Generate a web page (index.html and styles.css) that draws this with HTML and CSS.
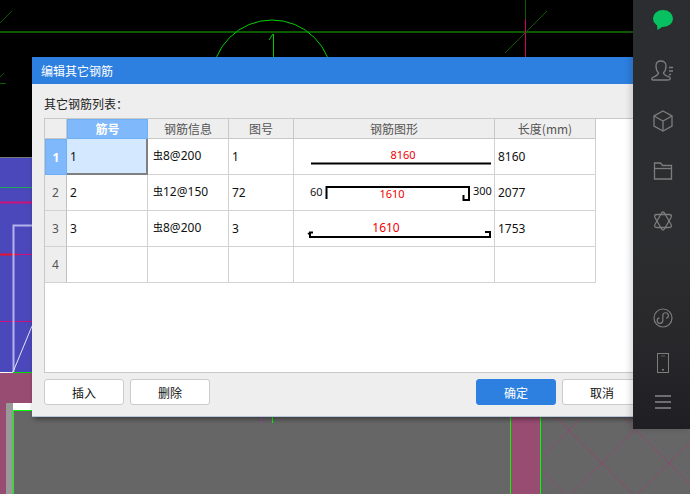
FILE: index.html
```html
<!DOCTYPE html>
<html lang="zh">
<head>
<meta charset="utf-8">
<title>编辑其它钢筋</title>
<link rel="stylesheet" href="styles.css">
</head>
<body>
<div class="desktop">
  <svg class="canvas" width="690" height="494" viewBox="0 0 690 494">
    <rect x="0" y="0" width="690" height="157" fill="#000"/>
    <rect x="0" y="157" width="690" height="1" fill="#777"/>
    <rect x="0" y="158" width="690" height="215" fill="#4b48bb"/>
    <rect x="0" y="373" width="690" height="121" fill="#994c72"/>
    <path d="M0 372.500H13" stroke="#fff" fill="none"/>
    <path d="M13 372.500H690" stroke="#0d0" fill="none"/>
    <rect x="6" y="403" width="7" height="91" fill="#999"/>
    <rect x="13" y="403" width="40" height="7" fill="#fff"/>
    <rect x="13" y="410" width="497" height="84" fill="#666"/>
    <rect x="541" y="410" width="149" height="84" fill="#666"/>
    <path d="M13 410.500H40M13.500 410V494M510.500 410V494M540.500 410V494M272.500 417V423" stroke="#0f0" fill="none"/>
    <path d="M261.500 417V423" stroke="#a040b0" fill="none"/>
    <path d="M0 32H633" stroke="#0b5a00" stroke-width="2" fill="none"/>
    <path d="M525.500 0V19M505 53L547 11M0 23L12 11M0 83.500H6M0 77L4 73" stroke="#0b5a00" fill="none"/>
    <path d="M525.500 19V57" stroke="#d0006a" fill="none"/>
    <circle cx="272" cy="80" r="60" stroke="#0c0" fill="none"/>
    <path d="M273.500 34V57M273 34L269 40" stroke="#0c0" fill="none"/>
    <path d="M0 187.500H32" stroke="#1fa85a" fill="none"/>
    <path d="M0 202.500H32" stroke="#d0107a" stroke-width="2" fill="none"/>
    <path d="M17 254.500H32M0 321.500H32" stroke="#d0107a" fill="none"/>
    <path d="M0 254.500H17" stroke="#e81030" stroke-width="2" fill="none"/>
    <path d="M13.500 372V225.500H32" stroke="#b4b4ec" stroke-width="2" fill="none"/>
    <path d="M13 372L32 326" stroke="#e4e4f8" fill="none"/>
    <path d="M549 410L633 494M616 410L690 484M541 470L565 494M589 410L541 458M655 410L571 494M690 442L638 494" stroke="#8a4a70" fill="none"/>
  </svg>

  <section class="dialog">
    <header class="dialog-title">编辑其它钢筋</header>
    <div class="dialog-body">
      <div class="list-label">其它钢筋列表：</div>
      <div class="table-box">
        <table class="grid">
          <colgroup>
            <col class="c-head"><col class="c-no"><col class="c-info"><col class="c-fig"><col class="c-shape"><col class="c-len">
          </colgroup>
          <thead>
            <tr>
              <th></th>
              <th class="is-active">筋号</th>
              <th>钢筋信息</th>
              <th>图号</th>
              <th>钢筋图形</th>
              <th>长度(mm)</th>
            </tr>
          </thead>
          <tbody>
            <tr>
              <th class="is-active">1</th>
              <td class="is-current">1</td>
              <td class="info"><span class="rebar">虫</span>8@200</td>
              <td>1</td>
              <td class="shape">
                <svg class="shape-svg" width="200" height="35" viewBox="0 0 200 35">
                  <text class="dim red" x="109" y="20" text-anchor="middle">8160</text>
                  <path class="bar" d="M17 24.500H197"/>
                </svg>
              </td>
              <td>8160</td>
            </tr>
            <tr>
              <th>2</th>
              <td>2</td>
              <td class="info"><span class="rebar">虫</span>12@150</td>
              <td>72</td>
              <td class="shape">
                <svg class="shape-svg" width="200" height="35" viewBox="0 0 200 35">
                  <text class="dim" x="16" y="21">60</text>
                  <path class="bar" d="M32.500 24V12H175V25H169.500V20"/>
                  <text class="dim red" x="98" y="23" text-anchor="middle">1610</text>
                  <text class="dim" x="179" y="20">300</text>
                </svg>
              </td>
              <td>2077</td>
            </tr>
            <tr>
              <th>3</th>
              <td>3</td>
              <td class="info"><span class="rebar">虫</span>8@200</td>
              <td>3</td>
              <td class="shape">
                <svg class="shape-svg" width="200" height="35" viewBox="0 0 200 35">
                  <text class="dim-lg red" x="92" y="21" text-anchor="middle">1610</text>
                  <path class="bar" d="M19 21.500H16V26H196V21H191"/>
                  <path class="bar-thin" d="M16 24L14 22"/>
                </svg>
              </td>
              <td>1753</td>
            </tr>
            <tr>
              <th>4</th>
              <td></td>
              <td></td>
              <td></td>
              <td></td>
              <td></td>
            </tr>
          </tbody>
        </table>
      </div>
      <div class="actions">
        <button class="btn">插入</button>
        <button class="btn">删除</button>
        <span class="spacer"></span>
        <button class="btn btn-primary">确定</button>
        <button class="btn">取消</button>
      </div>
    </div>
  </section>

  <aside class="sidebar">
    <div class="side-top">
      <svg class="ico ico-msg" width="24" height="24" viewBox="0 0 24 24"><ellipse cx="12" cy="8.500" rx="10" ry="8.500" fill="#07c160" transform="translate(0 2)"/><path d="M6 17L6.500 22L12 18.500Z" fill="#07c160"/></svg>
      <svg class="ico" width="24" height="24" viewBox="0 0 24 24" fill="none" stroke="#7d7d7d" stroke-width="1.300"><path d="M1.500 21H16.500C20 21 20 18.800 17.500 17.700C14 16.500 12.500 15.800 12.500 13.800C14 12.500 15 10 15 7C15 3.500 12.800 2 10 2C7.200 2 5 3.500 5 7C5 10 6 12.500 7.500 13.800C7.500 15.800 6 16.500 3.500 17.700C0.500 18.800 0 20.300 1.500 21Z"/><path d="M18 8.500H22M18 12H22M18 15.500H20"/></svg>
      <svg class="ico" width="24" height="24" viewBox="0 0 24 24" fill="none" stroke="#7d7d7d" stroke-width="1.300"><path d="M12 2L21 7V17L12 22L3 17V7Z"/><path d="M3 7L12 12L21 7M12 12V22"/></svg>
      <svg class="ico" width="24" height="24" viewBox="0 0 24 24" fill="none" stroke="#7d7d7d" stroke-width="1.300"><path d="M3.500 20H20.500V6.500H11.500L9.500 4H3.500Z"/><path d="M3.500 9.500H20.500"/></svg>
      <svg class="ico" width="24" height="24" viewBox="0 0 24 24" fill="none" stroke="#7d7d7d" stroke-width="1.300"><path d="M10 5Q12 1 14 5L19.500 14.500Q22 18.500 18 18.500H6Q2 18.500 4.500 14.500Z"/><path d="M10 19Q12 23 14 19L19.500 9.500Q22 5.500 18 5.500H6Q2 5.500 4.500 9.500Z"/></svg>
    </div>
    <div class="side-bottom">
      <svg class="ico ico-mini" width="24" height="24" viewBox="0 0 24 24" fill="none" stroke="#7d7d7d" stroke-width="1.200"><circle cx="12" cy="12" r="9"/><path d="M8.500 11.800A2.800 2.800 0 1 0 11.800 14.500V9.500A2.800 2.800 0 1 1 15.200 12.300"/></svg>
      <svg class="ico ico-phone" width="24" height="24" viewBox="0 0 24 24" fill="none" stroke="#7d7d7d" stroke-width="1"><rect x="6.500" y="2.500" width="11" height="19"/><path d="M10 5H14" stroke-width="0.600"/><rect x="11" y="18" width="2" height="1.500" fill="#7d7d7d" stroke="none"/></svg>
      <svg class="ico" width="24" height="24" viewBox="0 0 24 24" fill="none" stroke="#888" stroke-width="1.600"><path d="M4 6H20M4 12H20M4 18H20"/></svg>
    </div>
  </aside>
</div>
</body>
</html>
```
FILE: styles.css
```css
* { box-sizing: border-box; }
html, body { margin: 0; padding: 0; }
body {
  font-family: "Noto Sans", "Noto Sans CJK SC", sans-serif;
  font-size: 12px;
  color: #111;
}
.desktop {
  position: relative;
  width: 690px;
  height: 494px;
  overflow: hidden;
  background: #000;
}
.canvas { position: absolute; left: 0; top: 0; display: block; }

.dialog {
  position: absolute;
  left: 32px;
  top: 57px;
  width: 610px;
  height: 360px;
  display: flex;
  flex-direction: column;
  background: #eee;
  border-bottom: 1px solid #b9c6d8;
  box-shadow: 2px 2px 5px rgba(0, 0, 0, 0.45);
}
.dialog-title {
  height: 27px;
  flex: none;
  background: #2d7fe0;
  color: #fff;
  padding-left: 9px;
  line-height: 27px;
  font-family: "Noto Sans CJK SC", sans-serif;
}
.dialog-body {
  flex: 1;
  min-height: 0;
  display: flex;
  flex-direction: column;
  padding: 0 0 0 12px;
}
.list-label {
  height: 34px;
  padding-top: 11px;
  line-height: 18px;
  color: #222;
  font-family: "Noto Sans CJK TC", sans-serif;
}
.table-box {
  height: 255px;
  flex: none;
  background: #fff;
  border-left: 1px solid #c8c8c8;
  border-top: 1px solid #c8c8c8;
  border-bottom: 1px solid #c8c8c8;
}
.grid {
  border-collapse: separate;
  border-spacing: 0;
  table-layout: fixed;
  width: 551px;
}
.c-head { width: 22px; }
.c-no { width: 81px; }
.c-info { width: 81px; }
.c-fig { width: 65px; }
.c-shape { width: 201px; }
.c-len { width: 101px; }

.grid th, .grid td {
  border-right: 1px solid #d2d2d2;
  border-bottom: 1px solid #d2d2d2;
  padding: 0;
}
.grid thead th {
  height: 20px;
  background: #eee;
  color: #555;
  font-weight: 400;
  text-align: center;
  line-height: 18px;
  font-family: "Noto Sans CJK SC", sans-serif;
  border-right-color: #c8c8c8;
  border-bottom-color: #c8c8c8;
}
.grid tbody th {
  height: 36px;
  background: #eee;
  color: #555;
  font-weight: 400;
  text-align: center;
  border-right-color: #c0c0c0;
  border-bottom-color: #d2d2d2;
}
.grid td {
  height: 36px;
  padding-left: 3px;
  color: #111;
  white-space: nowrap;
}
.grid th.is-active {
  background: #7fb8fb;
  color: #fff;
  font-weight: 700;
  border: 1px solid #6fb0f5;
}
.grid td.is-current {
  background: #d4e8ff;
  border-right: 2px solid #808080;
  border-bottom: 2px solid #808080;
}
.grid td.shape { padding: 0; vertical-align: top; }
.grid td.info { padding: 0 0 2px 5px; }
.shape-svg { display: block; }
.rebar {
  font-family: "Noto Sans CJK SC", sans-serif;
  font-size: 10px;
  color: #000;
  position: relative;
  top: -1px;
}
.bar { fill: none; stroke: #000; stroke-width: 2; }
.bar-thin { fill: none; stroke: #000; stroke-width: 1.500; }
.dim { font-size: 11px; font-family: "Noto Sans", sans-serif; fill: #111; }
.dim-lg { font-size: 12px; font-family: "Noto Sans", sans-serif; }
.dim.red, .red { fill: #f00000; }

.actions {
  display: flex;
  gap: 6px;
  padding-top: 6px;
}
.spacer { width: 254px; }
.btn {
  width: 80px;
  height: 26px;
  flex: none;
  background: #fff;
  border: 1px solid #ccc;
  border-radius: 3px;
  font-family: "Noto Sans CJK SC", sans-serif;
  font-size: 12px;
  color: #111;
  padding: 0;
}
.btn-primary {
  background: #2d7fe0;
  border-color: #2d7fe0;
  color: #fff;
}

.sidebar {
  position: absolute;
  left: 633px;
  top: 0;
  width: 57px;
  height: 429px;
  background: linear-gradient(180deg, #2b2d30 0%, #2c2d2f 60%, #28272a 80%, #1f1f23 100%);
  box-shadow: -3px 0 6px rgba(0, 0, 0, 0.14);
  display: flex;
  flex-direction: column;
  justify-content: space-between;
  align-items: center;
  padding: 8px 0 15px 3px;
}
.side-top, .side-bottom {
  display: flex;
  flex-direction: column;
  align-items: center;
}
.side-top { gap: 26px; }
.ico { display: block; }
.ico-msg { margin-bottom: 1px; }
.ico-mini { margin-bottom: 21px; }
.ico-phone { margin-bottom: 15px; }
```
